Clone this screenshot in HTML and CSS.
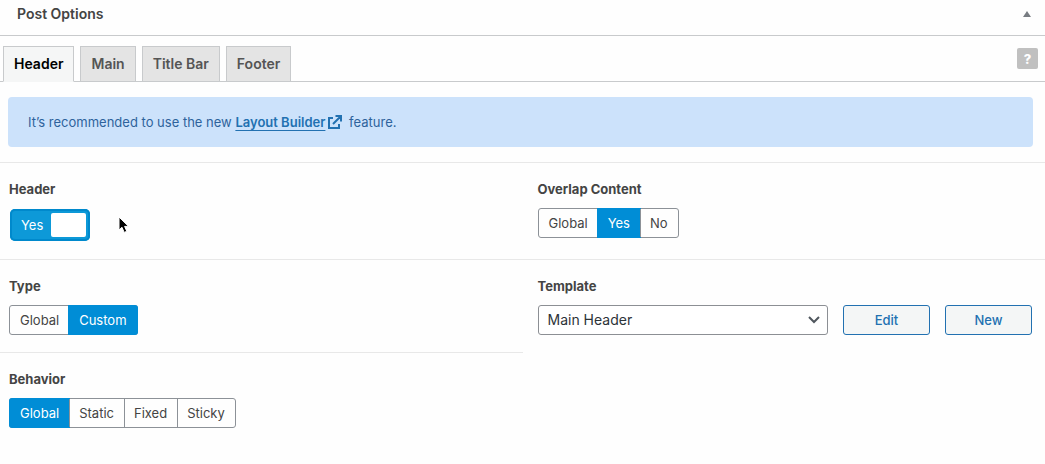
FILE: index.html
```html
<!DOCTYPE html>
<html lang="en">
<head>
    <meta charset="UTF-8">
    <meta name="viewport" content="width=device-width, initial-scale=1.0">
    <title>Post Options</title>
    <link rel="stylesheet" href="styles.css">
</head>
<body>

    <div class="postbox">
        <div class="postbox-header">
            <h2>Post Options</h2>
            <button type="button" class="toggle-panel" aria-label="Toggle panel">
                <svg width="8" height="6" viewBox="0 0 8 6"><path d="M4 0L8 6H0Z" fill="#787c82"/></svg>
            </button>
        </div>

        <div class="tab-bar">
            <div class="tabs">
                <button type="button" class="tab active">Header</button>
                <button type="button" class="tab">Main</button>
                <button type="button" class="tab">Title Bar</button>
                <button type="button" class="tab">Footer</button>
            </div>
            <button type="button" class="help">?</button>
        </div>

        <p class="notice">It’s recommended to use the new <a href="#">Layout Builder</a><svg class="external" width="14" height="14" viewBox="0 0 14 14" fill="none" stroke="#2271b1" stroke-width="2"><path d="M5 3H1V13H11V9M7.5 1H13V6.5M13 1L5 9"/></svg> feature.</p>

        <form class="fields">
            <div class="field">
                <label class="title" for="header">Header</label>
                <label class="switch">
                    <input type="checkbox" id="header" checked>
                    <span>Yes</span>
                    <span class="knob"></span>
                </label>
            </div>

            <div class="field">
                <div class="title" id="overlap">Overlap Content</div>
                <div class="segments" role="radiogroup" aria-labelledby="overlap">
                    <label><input type="radio" name="overlap">Global</label>
                    <label><input type="radio" name="overlap" checked>Yes</label>
                    <label><input type="radio" name="overlap">No</label>
                </div>
            </div>

            <div class="field">
                <div class="title" id="type">Type</div>
                <div class="segments" role="radiogroup" aria-labelledby="type">
                    <label><input type="radio" name="type">Global</label>
                    <label><input type="radio" name="type" checked>Custom</label>
                </div>
            </div>

            <div class="field">
                <label class="title" for="template">Template</label>
                <div class="template-row">
                    <div class="select">
                        <select id="template">
                            <option>Main Header</option>
                        </select>
                        <svg width="12" height="8" viewBox="0 0 12 8" fill="none" stroke="#50575e" stroke-width="2"><path d="M1 1L6 6L11 1"/></svg>
                    </div>
                    <button type="button" class="button">Edit</button>
                    <button type="button" class="button">New</button>
                </div>
            </div>

            <div class="field">
                <div class="title" id="behavior">Behavior</div>
                <div class="segments" role="radiogroup" aria-labelledby="behavior">
                    <label><input type="radio" name="behavior" checked>Global</label>
                    <label><input type="radio" name="behavior">Static</label>
                    <label><input type="radio" name="behavior">Fixed</label>
                    <label><input type="radio" name="behavior">Sticky</label>
                </div>
            </div>
        </form>
    </div>

    <svg class="cursor" width="12" height="18" viewBox="0 0 12 18"><path d="M1 1V14L4 11.3L6.2 16.4L8.8 15.3L6.6 10.4H10.6Z" fill="#000" stroke="#fff" stroke-width="1"/></svg>

</body>
</html>
```

FILE: styles.css
```css
* {
    margin: 0;
    padding: 0;
    box-sizing: border-box;
}
body {
    font-family: Inter, "Liberation Sans", sans-serif;
    font-size: 13px;
    line-height: 20px;
    color: #444;
    background-color: #fefefe;
}
button, select {
    font: inherit;
    cursor: pointer;
}
svg {
    display: block;
}
.postbox-header {
    display: flex;
    justify-content: space-between;
    align-items: center;
    padding: 4px 14px 12px 17px;
    border-bottom: 1px solid #c8cacc;
}
h2 {
    font-size: 14px;
    font-weight: 600;
    line-height: 19px;
}
.toggle-panel {
    border: none;
    background: none;
}

/* tabs */
.tab-bar {
    display: flex;
    justify-content: space-between;
    align-items: flex-start;
    padding: 10px 7px 0 3px;
    border-bottom: 1px solid #c8cacc;
}
.tabs {
    display: flex;
    gap: 6px;
    margin-bottom: -1px;
}
.tab {
    height: 36px;
    padding: 0 10px;
    border: 1px solid #c8cacc;
    background-color: #e4e4e4;
    color: #555;
    font-size: 14px;
    font-weight: 600;
}
.tab.active {
    background-color: #f5f6f6;
    border-bottom-color: #f5f6f6;
    color: #000;
}
.help {
    width: 21px;
    height: 21px;
    margin-top: 2px;
    border: none;
    border-radius: 2px;
    background-color: #c0c0c0;
    color: #fff;
    font-weight: 800;
}

/* notice */
.notice {
    margin: 15px 12px 15px 8px;
    padding: 15px 20px;
    border-radius: 4px;
    background-color: #cce2fb;
    color: #2e629c;
}
.notice a {
    color: #2271b1;
    font-weight: 600;
    text-underline-offset: 3px;
}
.external {
    display: inline-block;
    margin: 0 3px;
    vertical-align: -2px;
}

/* fields */
.fields {
    display: grid;
    grid-template-columns: 1fr 1fr;
}
.field {
    padding: 16px 13px 17px 9px;
    border-top: 1px solid #e8e8e8;
}
.field:nth-child(even) {
    padding-left: 15px;
}
.title {
    display: block;
    margin-bottom: 9px;
    font-weight: 700;
}
.segments {
    display: inline-flex;
    vertical-align: top;
    border: 1px solid #8c9197;
    border-radius: 3px;
}
.segments label {
    padding: 4px 10px;
    cursor: pointer;
}
.segments label + label {
    padding-left: 9px;
    border-left: 1px solid #8c9197;
}
.segments label:first-child {
    border-radius: 2px 0 0 2px;
}
.segments label:last-child {
    border-radius: 0 2px 2px 0;
}
/* the selected option also covers the group's own border */
.segments label:has(input:checked) {
    background-color: #008dd6;
    border-color: #008dd6;
    box-shadow: 0 0 0 1px #008dd6;
    color: #fff;
}
.segments input, .switch input {
    position: absolute;
    opacity: 0;
    pointer-events: none;
}
.switch {
    display: inline-flex;
    align-items: center;
    gap: 8px;
    vertical-align: top;
    height: 32px;
    margin: 1px;
    padding: 0 4px 0 11px;
    border-radius: 5px;
    background-color: #0d99d8;
    box-shadow: inset 0 0 0 2px #0089cc;
    color: #fff;
    cursor: pointer;
}
.knob {
    width: 35px;
    height: 24px;
    border-radius: 2px;
    background-color: #fff;
}
.template-row {
    display: flex;
    gap: 15px;
}
.select {
    display: grid;
    flex: 1;
    align-items: center;
}
.select select, .select svg {
    grid-area: 1 / 1;
}
.select select {
    width: 100%;
    height: 30px;
    padding: 0 24px 0 9px;
    appearance: none;
    border: 1px solid #8c8f94;
    border-radius: 3px;
    background-color: #fff;
    color: #2c3338;
    font-size: 14px;
}
.select svg {
    justify-self: end;
    margin-right: 8px;
    pointer-events: none;
}
.button {
    width: 87px;
    height: 30px;
    border: 1px solid #2271b1;
    border-radius: 3px;
    background-color: #f4f6f6;
    color: #2271b1;
    font-weight: 500;
}
.cursor {
    position: absolute;
    left: 118px;
    top: 216px;
}
```
